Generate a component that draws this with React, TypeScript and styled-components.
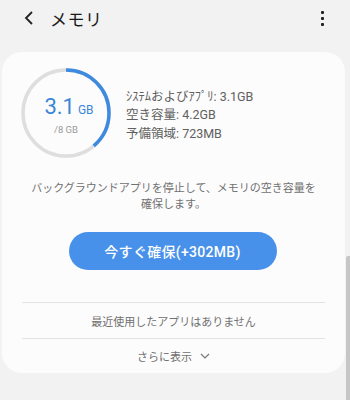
import React from "react";
import styled, { createGlobalStyle } from "styled-components";

const Global = createGlobalStyle`
  html, body { margin: 0; padding: 0; background: #f2f2f2; }
  body { font-family: Roboto, "Noto Sans CJK JP", "Noto Sans", sans-serif; }
`;

const Page = styled.div`
  width: 350px;
  height: 400px;
  background: #f2f2f2;
  position: relative;
  overflow: hidden;
`;

const Header = styled.div`
  height: 36px;
  display: flex;
  align-items: center;
  padding: 0 0 0 20px;
`;

const Back = styled.div`
  width: 18px;
  height: 18px;
  display: flex;
  align-items: center;
  justify-content: center;
`;

const Title = styled.div`
  margin-left: 12px;
  font-size: 17px;
  color: #1a1a1a;
  flex: 1;
  letter-spacing: 0.5px;
`;

const Kebab = styled.div`
  width: 20px;
  margin-right: 18px;
  display: flex;
  flex-direction: column;
  align-items: center;
  gap: 3px;
`;

const Dot = styled.span`
  width: 3px;
  height: 3px;
  background: #222;
  border-radius: 1px;
`;

const Card = styled.div`
  margin: 16px 5px 0 2px;
  background: #fcfcfc;
  border-radius: 20px;
  height: 321px;
  display: flex;
  flex-direction: column;
`;

const Summary = styled.div`
  display: flex;
  align-items: center;
  padding: 16px 0 0 19px;
`;

const Ring = styled.div`
  position: relative;
  width: 90px;
  height: 90px;
`;

const RingLabel = styled.div`
  position: absolute;
  inset: 0;
  display: flex;
  flex-direction: column;
  align-items: center;
  justify-content: center;
  padding-top: 4px;
`;

const Big = styled.div`
  color: #3a86d8;
  font-size: 22px;
  line-height: 24px;
  display: flex;
  align-items: baseline;
  gap: 3px;
  margin-left: 6px;
`;

const Unit = styled.span`
  font-size: 12px;
`;

const Total = styled.div`
  font-size: 9.5px;
  color: #9a9a9a;
  margin-top: 2px;
`;

const Stats = styled.div`
  margin-left: 15px;
  display: flex;
  flex-direction: column;
  gap: 1px;
  margin-top: 4px;
`;

const Stat = styled.div`
  font-size: 12.5px;
  line-height: 17.5px;
  color: #606060;
`;

const Desc = styled.div`
  margin-top: 23px;
  text-align: center;
  font-size: 11px;
  line-height: 16px;
  color: #707070;
  padding: 0 20px;
`;

const Button = styled.button`
  align-self: center;
  margin-top: 19px;
  width: 208px;
  height: 38px;
  border: none;
  border-radius: 19px;
  background: #4891ea;
  color: #fff;
  font-family: Roboto, "Noto Sans CJK JP", sans-serif;
  font-size: 14px;
  font-weight: 500;
  letter-spacing: 0.3px;
  margin-left: -2px;
`;

const Spacer = styled.div`
  height: 32px;
`;

const Divider = styled.div`
  height: 1px;
  background: #e3e3e3;
  margin: 0 20px;
`;

const Row = styled.div<{ $h: number }>`
  height: ${(p) => p.$h}px;
  display: flex;
  align-items: center;
  justify-content: center;
  gap: 8px;
  font-size: 11px;
  color: #707070;
`;

const Scrollbar = styled.div`
  position: absolute;
  right: 0;
  top: 256px;
  width: 4px;
  height: 144px;
  background: #c6c6c6;
  border-radius: 2px 0 0 0;
`;

const R = 43;
const C = 2 * Math.PI * R;
const frac = 3.1 / 8;

export default function App() {
  return (
    <Page>
      <Global />
      <Header>
        <Back>
          <svg width="12" height="16" viewBox="0 0 12 16">
            <path d="M9 2 L3 8 L9 14" fill="none" stroke="#222" strokeWidth="1.8" />
          </svg>
        </Back>
        <Title>メモリ</Title>
        <Kebab>
          <Dot />
          <Dot />
          <Dot />
        </Kebab>
      </Header>
      <Card>
        <Summary>
          <Ring>
            <svg width="90" height="90" viewBox="0 0 90 90">
              <circle cx="45" cy="45" r={R} fill="none" stroke="#dedede" strokeWidth="3.5" />
              <circle
                cx="45"
                cy="45"
                r={R}
                fill="none"
                stroke="#3d8ae0"
                strokeWidth="3.5"
                strokeDasharray={`${C * frac} ${C}`}
                transform="rotate(-90 45 45)"
              />
            </svg>
            <RingLabel>
              <Big>
                3.1<Unit>GB</Unit>
              </Big>
              <Total>/8 GB</Total>
            </RingLabel>
          </Ring>
          <Stats>
            <Stat>ｼｽﾃﾑおよびｱﾌﾟﾘ: 3.1GB</Stat>
            <Stat>空き容量: 4.2GB</Stat>
            <Stat>予備領域: 723MB</Stat>
          </Stats>
        </Summary>
        <Desc>
          バックグラウンドアプリを停止して、メモリの空き容量を
          <br />
          確保します。
        </Desc>
        <Button>今すぐ確保(+302MB)</Button>
        <Spacer />
        <Divider />
        <Row $h={35}>最近使用したアプリはありません</Row>
        <Divider />
        <Row $h={33}>
          さらに表示
          <svg width="10" height="6" viewBox="0 0 10 6">
            <path d="M1 1 L5 5 L9 1" fill="none" stroke="#777" strokeWidth="1.2" />
          </svg>
        </Row>
      </Card>
      <Scrollbar />
    </Page>
  );
}
